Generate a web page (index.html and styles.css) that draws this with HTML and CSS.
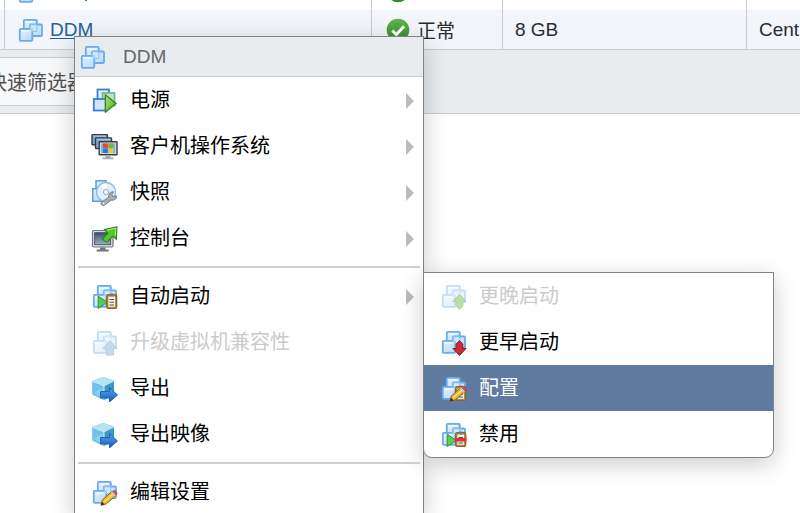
FILE: index.html
```html
<!DOCTYPE html>
<html lang="zh-CN">
<head>
  <meta charset="UTF-8" />
  <meta name="viewport" content="width=device-width, initial-scale=1" />
  <title>DDM</title>
  <link rel="stylesheet" href="styles.css">
</head>
<body>
  <svg class="sprite" aria-hidden="true">
    <defs>
      <linearGradient id="g-blue" x1="0" y1="0" x2="1" y2="1">
        <stop offset="0" stop-color="#e6f3fe" /><stop offset="1" stop-color="#b4d8f9" />
      </linearGradient>
      <linearGradient id="g-green" x1="0" y1="0" x2="1" y2="1">
        <stop offset="0" stop-color="#b5e67c" /><stop offset="1" stop-color="#46a324" />
      </linearGradient>
      <linearGradient id="g-screen" x1="0" y1="0" x2="0" y2="1">
        <stop offset="0" stop-color="#3c5069" /><stop offset="1" stop-color="#9db0c7" />
      </linearGradient>
      <linearGradient id="g-arrow" x1="0" y1="0" x2="0" y2="1">
        <stop offset="0" stop-color="#5ba6ee" /><stop offset="1" stop-color="#1459b8" />
      </linearGradient>
      <linearGradient id="g-ok" x1="0" y1="0" x2="0" y2="1">
        <stop offset="0" stop-color="#62b64f" /><stop offset="1" stop-color="#35862a" />
      </linearGradient>

      <!-- three overlapping squares: the base of most icons -->
      <symbol id="i-vm" viewBox="0 0 28 28">
        <g fill="url(#g-blue)" stroke="#6aabef" stroke-width="1.8">
          <rect x="6.8" y="3.8" width="13" height="12" rx="1" />
          <rect x="13" y="8.5" width="12" height="11.5" rx="1" />
          <rect x="2.8" y="12.8" width="12.500" height="12" rx="1" />
        </g>
        <path d="M13 15.500v-7h6.800v7h-4.500" fill="#cde6fc" fill-opacity=".6" stroke="#8abdf2" stroke-width="1" />
        <path d="M4.500 15h9M8.500 6h9" stroke="#fff" stroke-opacity=".7" stroke-width="1.4" />
      </symbol>

      <symbol id="i-clip" viewBox="0 0 28 28">
        <rect x="15.7" y="12.7" width="10" height="13.8" rx="1.4" fill="#b98a45" stroke="#8c6228" stroke-width="1.2" />
        <rect x="17.4" y="14.6" width="6.6" height="10.2" fill="#f3f1ec" />
        <rect x="18.6" y="11.4" width="4.2" height="2.800" rx="1" fill="#777" />
        <path d="M18.500 17.500h4.500M18.500 20.200h4.500M18.500 23h4.500" stroke="#555" stroke-width="1.100" />
      </symbol>

      <symbol id="i-pencil" viewBox="0 0 28 28">
        <path d="M10 27.300l1.500-5.600 9.600-8.300 3.800 4.200-9.500 8.200z" fill="#eeb62c" stroke="#8d6316" stroke-width="1" />
        <path d="M13.300 23.800l9.300-8.100" stroke="#fbe07c" stroke-width="1.500" />
        <path d="M10 27.300l.9-3.500 2.700 2.600z" fill="#332b20" />
        <path d="M19.800 14.500l1.700-1.400 3.700 4.200-1.600 1.400z" fill="#c8ccd2" />
        <path d="M21.500 13.100q1.800-1.500 3.600.3t.2 3.900z" fill="#ee5546" stroke="#b93a30" stroke-width=".7" />
      </symbol>

      <symbol id="i-power" viewBox="0 0 28 28">
        <g stroke-width="1.800">
          <rect x="6.500" y="3.500" width="11.500" height="12" fill="#e4f1fd" stroke="#3e7dd0" />
          <rect x="11.500" y="7" width="12" height="12.500" fill="#bfe8c4" stroke="#6fb99a" />
          <rect x="2.800" y="13" width="12.500" height="11.500" fill="#cfe5fb" stroke="#3e7dd0" />
        </g>
        <path d="M14.300 8.800l10.800 8.700-10.800 8.700z" fill="url(#g-green)" stroke="#3b7f22" stroke-width="1.300" stroke-linejoin="round" />
      </symbol>

      <symbol id="i-guest" viewBox="0 0 28 28">
        <g fill="#7fa8d2" stroke="#373c42" stroke-width="1.400">
          <rect x="1" y="2.800" width="15.500" height="10" rx=".6" />
          <rect x="4.500" y="6" width="16" height="10.500" rx=".6" />
          <rect x="8.200" y="9.800" width="17.800" height="13" rx=".6" fill="#e7e9ec" />
        </g>
        <path d="M2 4h13M5.500 7.200h14" stroke="#b9d2ea" stroke-width="1" />
        <path d="M14.500 23h5v2.600h3v1.600h-11v-1.600h3z" fill="#a4a9af" />
        <rect x="9.800" y="11.300" width="14.600" height="10" fill="#84b3e2" />
        <rect x="12" y="11.500" width="4.800" height="4.500" fill="#e5482c" />
        <rect x="17.400" y="11.500" width="4.800" height="4.500" fill="#77ba2d" />
        <rect x="12" y="16.500" width="4.800" height="4.500" fill="#2f78d4" />
        <rect x="17.400" y="16.500" width="4.800" height="4.500" fill="#f8c52a" />
      </symbol>

      <symbol id="i-snapshot" viewBox="0 0 28 28">
        <g fill="url(#g-blue)" stroke="#5c9ae2" stroke-width="1.500">
          <rect x="5" y="2.800" width="10" height="11" />
          <rect x="1.800" y="10.800" width="10" height="12.500" />
        </g>
        <circle cx="15" cy="14" r="9.500" fill="#e3effb" stroke="#8db6e4" stroke-width="1.300" />
        <path d="M15 14l-5-7a8.500 8.500 0 0 1 6-1.300zM15 14l7 5a8.500 8.500 0 0 1-5 3.400z" fill="#fff" />
        <circle cx="15" cy="14" r="2.600" fill="#fff" stroke="#84a9d2" stroke-width="1" />
        <path d="M10.500 24.300l7.300-5.300c-.6-3 1.600-5.500 4.700-5.200l-1.700 2.800 1.500 2 3.300-.6c.2 3-2.400 4.600-5.200 4.100l-7 5c-2.600 1-4.400-1.300-2.900-2.800z" fill="#a9acb0" stroke="#7b7f84" stroke-width="1" />
        <circle cx="12.500" cy="25.300" r=".9" fill="#fff" />
      </symbol>

      <symbol id="i-console" viewBox="0 0 28 28">
        <rect x="1.500" y="6.500" width="20.500" height="16.500" rx="1.200" fill="#d7dce2" stroke="#6d7680" stroke-width="1.200" />
        <rect x="3.700" y="8.700" width="16" height="12" fill="url(#g-screen)" stroke="#3b4656" stroke-width=".8" />
        <path d="M9 23.500h5.500v2h3.300v2H5.700v-2H9z" fill="#6f7882" />
        <path d="M11.300 15l5.700-5.800-3.800-3.600L26 2.800l-.6 12.600-3.600-3.200-6 6.200z" fill="#55c62c" stroke="#2b8718" stroke-width="1.100" stroke-linejoin="round" />
        <path d="M16 6.100l8.800-1.900-.5 7" fill="none" stroke="#b0ee82" stroke-width="1" />
      </symbol>

      <symbol id="i-auto" viewBox="0 0 28 28">
        <use href="#i-vm" />
        <path d="M7.200 14l8.800 6.300-8.800 6.300z" fill="#56cf4a" stroke="#2c9430" stroke-width="1" />
        <use href="#i-clip" />
      </symbol>

      <symbol id="i-upgrade" viewBox="0 0 28 28">
        <use href="#i-vm" />
        <path d="M19 13l7 7.500h-3.400V27h-7.200v-6.500H12z" fill="#6f9fd8" stroke="#4677b5" stroke-width="1" />
      </symbol>

      <symbol id="i-export" viewBox="0 0 28 28">
        <path d="M12 3l11 3.500v13.500L13 26 1.500 20.500V7z" fill="#52aeda" />
        <path d="M12 3l11 3.500-10 5L1.500 7z" fill="#b3e3f4" />
        <path d="M1.500 7L13 11.500V26L1.500 20.500z" fill="#72c4e5" />
        <path d="M13 11.500l10-5V20L13 26z" fill="#3c97c9" />
        <path d="M2 7.400l11 4.300 10-4.700M13 12v13" fill="none" stroke="#d5f2fb" stroke-width="1" />
        <path d="M3 19l8-5v10z" fill="#9adcf2" fill-opacity=".6" />
        <path d="M9.500 17.500h9v-4l8 7.500-8 7v-4h-9z" fill="url(#g-arrow)" stroke="#1d5fae" stroke-width=".9" />
      </symbol>

      <symbol id="i-edit" viewBox="0 0 28 28">
        <use href="#i-vm" />
        <use href="#i-pencil" />
      </symbol>

      <symbol id="i-later" viewBox="0 0 28 28">
        <use href="#i-vm" />
        <path d="M19.500 12.500l6.500 7h-3.200V24l-3.300 3.200-3.300-3.200v-4.500H13z" fill="#4fb522" stroke="#34871a" stroke-width="1" />
      </symbol>

      <symbol id="i-earlier" viewBox="0 0 28 28">
        <use href="#i-vm" />
        <path d="M19.500 27.500l6.500-7h-3.200V16l-3.300-3.200-3.300 3.200v4.500H13z" fill="#cf2937" stroke="#8d1722" stroke-width="1" />
      </symbol>

      <symbol id="i-config" viewBox="0 0 28 28">
        <use href="#i-vm" />
        <use href="#i-clip" />
        <use href="#i-pencil" />
      </symbol>

      <symbol id="i-disable" viewBox="0 0 28 28">
        <use href="#i-auto" />
        <rect x="15" y="18" width="11.500" height="3.500" fill="#e3322c" />
      </symbol>

      <symbol id="i-ok" viewBox="0 0 28 28">
        <circle cx="14" cy="14" r="11.300" fill="url(#g-ok)" />
        <path d="M8.300 14.500l4 4 7.800-8.300" fill="none" stroke="#fff" stroke-width="3" />
      </symbol>
    </defs>
  </svg>

  <main class="page">
    <table class="vm-table">
      <colgroup>
        <col class="col-edge" />
        <col class="col-name" />
        <col class="col-status" />
        <col class="col-memory" />
        <col />
      </colgroup>
      <tbody>
        <tr>
          <td></td>
          <td><div class="cell"><svg class="icon"><use href="#i-vm" /></svg><a href="#">Devp</a></div></td>
          <td><div class="cell"><svg class="icon"><use href="#i-ok" /></svg></div></td>
          <td></td>
          <td></td>
        </tr>
        <tr class="selected">
          <td></td>
          <td><div class="cell"><svg class="icon"><use href="#i-vm" /></svg><a href="#">DDM</a></div></td>
          <td><div class="cell"><svg class="icon"><use href="#i-ok" /></svg>正常</div></td>
          <td><div class="cell">8 GB</div></td>
          <td><div class="cell">Cent</div></td>
        </tr>
      </tbody>
    </table>
    <div class="toolbar">
      <button class="filter" type="button">快速筛选器</button>
    </div>
  </main>

  <nav class="menu context-menu">
    <div class="menu-title"><svg class="icon"><use href="#i-vm" /></svg>DDM</div>
    <ul>
      <li><button class="more" type="button"><svg class="icon"><use href="#i-power" /></svg>电源</button></li>
      <li><button class="more" type="button"><svg class="icon"><use href="#i-guest" /></svg>客户机操作系统</button></li>
      <li><button class="more" type="button"><svg class="icon"><use href="#i-snapshot" /></svg>快照</button></li>
      <li><button class="more" type="button"><svg class="icon"><use href="#i-console" /></svg>控制台</button></li>
      <li class="separator"></li>
      <li>
        <button class="more" type="button"><svg class="icon"><use href="#i-auto" /></svg>自动启动</button>
        <ul class="menu submenu">
          <li><button type="button" disabled><svg class="icon"><use href="#i-later" /></svg>更晚启动</button></li>
          <li><button type="button"><svg class="icon"><use href="#i-earlier" /></svg>更早启动</button></li>
          <li><button class="active" type="button"><svg class="icon"><use href="#i-config" /></svg>配置</button></li>
          <li><button type="button"><svg class="icon"><use href="#i-disable" /></svg>禁用</button></li>
        </ul>
      </li>
      <li><button type="button" disabled><svg class="icon"><use href="#i-upgrade" /></svg>升级虚拟机兼容性</button></li>
      <li><button type="button"><svg class="icon"><use href="#i-export" /></svg>导出</button></li>
      <li><button type="button"><svg class="icon"><use href="#i-export" /></svg>导出映像</button></li>
      <li class="separator"></li>
      <li><button type="button"><svg class="icon"><use href="#i-edit" /></svg>编辑设置</button></li>
    </ul>
  </nav>
</body>
</html>
```

FILE: styles.css
```css
:root {
  --text: #2b2b2b;
  --muted: #666;
  --disabled: #cbcbcb;
  --link: #26619c;
  --line: #c9cbce;
  --band: #e8ecef;
  --row: #f2f5fa;
  --active: #5f7ca0;
  --menu-border: #808386;
}

* {
  box-sizing: border-box;
}

body {
  margin: 0;
  min-height: 100vh;
  position: relative;
  overflow: hidden;
  background: #fff;
  color: var(--text);
  font-family: "Liberation Sans", "Noto Sans CJK SC", sans-serif;
  font-size: 19px;
}

button {
  font-family: inherit;
  font-size: 20px;
  cursor: pointer;
}

ul {
  list-style: none;
  margin: 0;
  padding: 0;
}

.sprite {
  position: absolute;
  width: 0;
  height: 0;
}

.icon {
  width: 28px;
  height: 28px;
  flex: none;
}

.page {
  height: 100vh;
  overflow: hidden;
}

/* the list is scrolled, only the end of the first row shows */
.vm-table {
  width: 100%;
  margin-top: -28px;
  table-layout: fixed;
  border-collapse: separate;
  border-spacing: 0;
}

.col-edge { width: 5px; }
.col-name { width: 367px; }
.col-status { width: 131px; }
.col-memory { width: 244px; }

.vm-table td {
  height: 38px;
  padding: 0;
  border-right: 1px solid var(--line);
  white-space: nowrap;
}

.vm-table td:last-child {
  border-right: none;
}

.vm-table .selected td {
  height: 40px;
  background: var(--row);
  border-bottom: 1px solid var(--line);
}

.cell {
  display: flex;
  align-items: center;
  gap: 5px;
  padding-left: 12px;
}

.cell a {
  color: var(--link);
  text-underline-offset: 2px;
}

.toolbar {
  height: 64px;
  padding-top: 7px;
  background: var(--band);
  border-bottom: 1px solid var(--line);
}

.filter {
  height: 49px;
  margin-left: -26px;
  padding: 0 12px;
  background: #f7f8f9;
  border: 1px solid var(--line);
  color: #505050;
}

.menu {
  position: absolute;
  background: #fff;
  border: 1px solid var(--menu-border);
  box-shadow: 0 6px 24px rgba(0, 0, 0, 0.2);
}

.context-menu {
  left: 74px;
  top: 36px;
  width: 350px;
}

.submenu {
  left: 100%;
  top: -1px;
  width: 351px;
  border-radius: 0 0 9px 9px;
}

.menu-title {
  display: flex;
  align-items: center;
  gap: 16px;
  height: 40px;
  padding-left: 4px;
  background: var(--band);
  border-bottom: 1px solid var(--line);
  color: var(--muted);
}

.menu li {
  position: relative;
}

.menu button {
  display: flex;
  align-items: center;
  gap: 11px;
  width: 100%;
  height: 46px;
  padding: 0 9px 3px 16px;
  border: none;
  background: none;
  color: #000;
  text-align: left;
}

.menu button .icon {
  margin-top: 3px;
}

.menu button.active {
  background: var(--active);
  color: #fff;
}

.menu button:disabled {
  color: var(--disabled);
  cursor: default;
}

.menu button:disabled .icon {
  opacity: 0.4;
}

.more::after {
  content: "";
  margin: 4px 0 0 auto;
  border-left: 8px solid #bbb;
  border-top: 8px solid transparent;
  border-bottom: 8px solid transparent;
}

.separator {
  height: 12px;
  padding: 5px 3px;
}

.separator::before {
  content: "";
  display: block;
  height: 2px;
  background: #d0d0d0;
}
```
